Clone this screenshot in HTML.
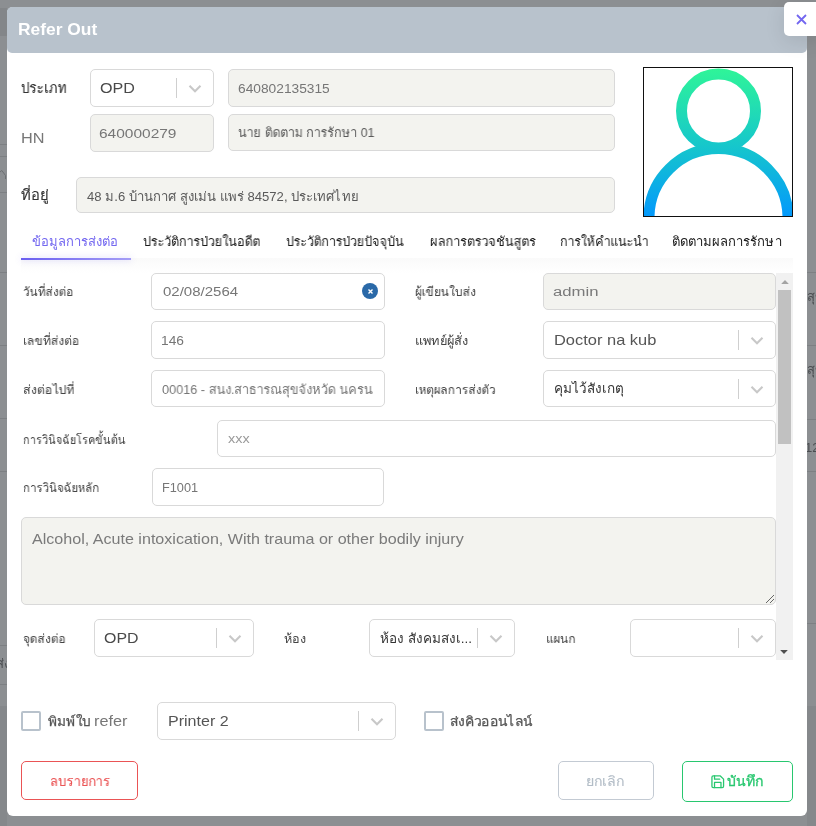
<!DOCTYPE html>
<html><head><meta charset="utf-8">
<style>
*{box-sizing:border-box;margin:0;padding:0}
html,body{width:816px;height:826px;overflow:hidden}
body{background:#8c8f92;font-family:"Liberation Sans",sans-serif;position:relative;color:#626262}
.a{position:absolute}
.t{position:absolute;line-height:40px;white-space:nowrap;transform-origin:0 0;will-change:transform}
.bgline{position:absolute;height:1px;background:#7d8083}
.modal{left:7px;top:7px;width:800px;height:809px;background:#fff;border-radius:6px}
.hdr{left:7px;top:7px;width:800px;height:46px;background:#b8c2cc;border-radius:5px}
.close{left:784px;top:2px;width:40px;height:34px;background:#fff;border-radius:5px;box-shadow:0 5px 20px 0 rgba(0,0,0,.1)}
.fld{position:absolute;border:1px solid #d9d9d9;border-radius:5px;background:#fff}
.dis{background:#f3f3ef}
.sep{position:absolute;width:1px;background:#cfcfcf}
.chev{position:absolute;width:14px;height:9px}
.cb{position:absolute;border:2px solid #b8c2cc;border-radius:2px;width:20px;height:20px}
.btn{position:absolute;border-radius:5px;border:1px solid}
</style></head><body>
<div class="a" style="left:0;top:8px;width:7px;height:28px;background:#838689"></div>
<div class="bgline" style="left:0;top:144px;width:7px"></div>
<div class="bgline" style="left:0;top:156px;width:7px"></div>
<svg class="a" style="left:0;top:169px" width="7" height="11" viewBox="0 0 7 11"><path d="M0 3L1.8 1.5L5.5 6.5V10" fill="none" stroke="#6d7073" stroke-width="1"/></svg>
<div class="bgline" style="left:0;top:192px;width:7px"></div>
<div class="bgline" style="left:0;top:272px;width:7px"></div>
<div class="bgline" style="left:0;top:345px;width:7px"></div>
<div class="bgline" style="left:0;top:418px;width:7px"></div>
<div class="bgline" style="left:0;top:471px;width:7px"></div>
<div class="bgline" style="left:0;top:645px;width:7px"></div>
<div class="bgline" style="left:0;top:684px;width:7px"></div>
<div class="a" style="left:0;top:706px;width:7px;height:120px;background:#85888b"></div>
<div class="bgline" style="left:807px;top:272px;width:9px"></div>
<div class="bgline" style="left:807px;top:345px;width:9px"></div>
<div class="bgline" style="left:807px;top:419px;width:9px"></div>
<div class="bgline" style="left:807px;top:471px;width:9px"></div>
<div class="bgline" style="left:807px;top:623px;width:9px"></div>
<div class="a" style="left:807px;top:706px;width:9px;height:120px;background:#85888b"></div>
<div class="a" style="left:0;top:650px;width:7px;height:30px;overflow:hidden"><div class="t" style="left:-4px;top:-6px;font-size:13px;color:#4a4d50">ส่ง</div></div>
<div class="a" style="left:807px;top:280px;width:9px;height:190px;overflow:hidden"><div class="t" style="left:0;top:-3px;font-size:13px;color:#4a4d50">สุข</div><div class="t" style="left:0;top:70px;font-size:13px;color:#4a4d50">สุข</div><div class="t" style="left:-2px;top:148px;font-size:13px;color:#4a4d50">12</div></div>
<div class="a modal"></div>
<div class="a hdr"></div>
<div class="a close"></div>
<svg class="a" style="left:795.5px;top:14px" width="11" height="11" viewBox="0 0 11 11"><path d="M1 1L10 10M10 1L1 10" stroke="#7367f0" stroke-width="1.8" fill="none"/></svg>

<!-- top patient info -->
<div class="fld" style="left:90px;top:69px;width:124px;height:38px"></div>
<div class="sep" style="left:176px;top:78px;height:20px"></div>
<svg class="chev" style="left:188px;top:84px" viewBox="0 0 14 9"><path d="M1.5 1.8L7 7.2L12.5 1.8" stroke="#c8c8c8" stroke-width="2.1" fill="none"/></svg>
<div class="fld dis" style="left:228px;top:69px;width:387px;height:38px"></div>
<div class="fld dis" style="left:90px;top:114px;width:124px;height:38px"></div>
<div class="fld dis" style="left:228px;top:114px;width:387px;height:37px"></div>
<div class="fld dis" style="left:76px;top:177px;width:539px;height:36px"></div>

<!-- photo -->
<div class="a" style="left:643px;top:67px;width:150px;height:150px;border:1px solid #111;background:#fff;overflow:hidden">
<svg width="148" height="148" viewBox="0 0 148 148" style="display:block">
<defs><linearGradient id="g" gradientUnits="userSpaceOnUse" x1="0" y1="0" x2="0" y2="148"><stop offset="0" stop-color="#2ff598"/><stop offset="0.5" stop-color="#17c9c9"/><stop offset="1" stop-color="#0499fb"/></linearGradient></defs>
<circle cx="74.5" cy="43" r="37" fill="none" stroke="url(#g)" stroke-width="11"/>
<path d="M5 150 A69 69 0 0 1 144 150" fill="none" stroke="url(#g)" stroke-width="11"/>
</svg>
</div>

<!-- tabs -->
<div class="a" style="left:21px;top:258px;width:772px;height:15px;background:linear-gradient(#fafafa,#fff)"></div>
<div class="a" style="left:21px;top:258px;width:110px;height:2px;background:linear-gradient(90deg,#6a5ef0,#a59ef6);box-shadow:0 0 6px 0 rgba(115,103,240,.35)"></div>

<!-- scroll content -->
<div class="fld" style="left:151px;top:273px;width:234px;height:37px"></div>
<div class="a" style="left:362px;top:283px;width:16px;height:16px;border-radius:50%;background:#2a69a8"></div>
<svg class="a" style="left:367.5px;top:288.5px" width="5" height="5" viewBox="0 0 5 5"><path d="M0.5 0.5L4.5 4.5M4.5 0.5L0.5 4.5" stroke="#fff" stroke-width="1.4"/></svg>
<div class="fld dis" style="left:543px;top:273px;width:233px;height:37px"></div>

<div class="fld" style="left:151px;top:321px;width:234px;height:38px"></div>
<div class="fld" style="left:543px;top:321px;width:233px;height:38px"></div>
<div class="sep" style="left:738px;top:330px;height:20px"></div>
<svg class="chev" style="left:750px;top:335.5px" viewBox="0 0 14 9"><path d="M1.5 1.8L7 7.2L12.5 1.8" stroke="#c8c8c8" stroke-width="2.1" fill="none"/></svg>

<div class="fld" style="left:151px;top:370px;width:234px;height:37px"></div>
<div class="fld" style="left:543px;top:370px;width:233px;height:37px"></div>
<div class="sep" style="left:738px;top:379px;height:20px"></div>
<svg class="chev" style="left:750px;top:384.5px" viewBox="0 0 14 9"><path d="M1.5 1.8L7 7.2L12.5 1.8" stroke="#c8c8c8" stroke-width="2.1" fill="none"/></svg>

<div class="fld" style="left:217px;top:420px;width:559px;height:37px"></div>
<div class="fld" style="left:152px;top:468px;width:232px;height:38px"></div>
<div class="fld dis" style="left:21px;top:517px;width:755px;height:88px"></div>
<svg class="a" style="left:765px;top:594px" width="10" height="10" viewBox="0 0 10 10"><path d="M9 1L1 9M9 5L5 9" stroke="#666" stroke-width="1"/></svg>

<div class="fld" style="left:94px;top:619px;width:160px;height:38px"></div>
<div class="sep" style="left:216px;top:628px;height:20px"></div>
<svg class="chev" style="left:228px;top:634px" viewBox="0 0 14 9"><path d="M1.5 1.8L7 7.2L12.5 1.8" stroke="#c8c8c8" stroke-width="2.1" fill="none"/></svg>
<div class="fld" style="left:369px;top:619px;width:146px;height:38px"></div>
<div class="sep" style="left:477px;top:628px;height:20px"></div>
<svg class="chev" style="left:489px;top:634px" viewBox="0 0 14 9"><path d="M1.5 1.8L7 7.2L12.5 1.8" stroke="#c8c8c8" stroke-width="2.1" fill="none"/></svg>
<div class="fld" style="left:630px;top:619px;width:146px;height:38px"></div>
<div class="sep" style="left:738px;top:628px;height:20px"></div>
<svg class="chev" style="left:750px;top:634px" viewBox="0 0 14 9"><path d="M1.5 1.8L7 7.2L12.5 1.8" stroke="#c8c8c8" stroke-width="2.1" fill="none"/></svg>

<!-- scrollbar -->
<div class="a" style="left:776px;top:273px;width:17px;height:387px;background:#f1f1f1"></div>
<div class="a" style="left:778px;top:290px;width:13px;height:154px;background:#c1c1c1"></div>
<svg class="a" style="left:780.5px;top:279px" width="8" height="6" viewBox="0 0 8 6"><path d="M0.2 5L4 1L7.8 5Z" fill="#a3a3a3"/></svg>
<svg class="a" style="left:780px;top:648.5px" width="8" height="6" viewBox="0 0 8 6"><path d="M0.2 1L4 5L7.8 1Z" fill="#505050"/></svg>

<!-- bottom -->
<div class="cb" style="left:21px;top:711px"></div>
<div class="fld" style="left:157px;top:702px;width:239px;height:38px"></div>
<div class="sep" style="left:358px;top:711px;height:20px"></div>
<svg class="chev" style="left:370px;top:717px" viewBox="0 0 14 9"><path d="M1.5 1.8L7 7.2L12.5 1.8" stroke="#c8c8c8" stroke-width="2.1" fill="none"/></svg>
<div class="cb" style="left:424px;top:711px"></div>

<div class="btn" style="left:21px;top:761px;width:117px;height:39px;border-color:#ea5455"></div>
<div class="btn" style="left:558px;top:761px;width:96px;height:39px;border-color:#c3cad3"></div>
<div class="btn" style="left:682px;top:761px;width:111px;height:41px;border-color:#28c76f"></div>
<svg class="a" style="left:710.3px;top:774.1px" width="15.5" height="15.5" viewBox="0 0 24 24" fill="none" stroke="#28c76f" stroke-width="2" stroke-linecap="round" stroke-linejoin="round"><path d="M19 21H5a2 2 0 0 1-2-2V5a2 2 0 0 1 2-2h11l5 5v11a2 2 0 0 1-2 2z"/><polyline points="17 21 17 13 7 13 7 21"/><polyline points="7 3 7 8 15 8"/></svg>

<div class="t" style="left:17.9px;top:9.0px;font-size:16.5px;font-weight:bold;color:#fff;transform:scaleX(1.054);">Refer Out</div>
<div class="t" style="left:20.6px;top:67.6px;font-size:14.5px;font-weight:normal;color:#333;transform:scaleX(0.921);-webkit-text-stroke:0.12px #333;">ประเภท</div>
<div class="t" style="left:99.9px;top:68.0px;font-size:15px;font-weight:normal;color:#4a4a4a;transform:scaleX(1.074);">OPD</div>
<div class="t" style="left:238.3px;top:69.0px;font-size:12.5px;font-weight:normal;color:#767676;transform:scaleX(1.100);">640802135315</div>
<div class="t" style="left:20.8px;top:117.8px;font-size:14.5px;font-weight:normal;color:#777;transform:scaleX(1.121);">HN</div>
<div class="t" style="left:98.8px;top:114.4px;font-size:12.5px;font-weight:normal;color:#767676;transform:scaleX(1.238);">640000279</div>
<div class="t" style="left:238.4px;top:113.0px;font-size:13px;font-weight:normal;color:#5a5a5a;transform:scaleX(0.960);">นาย ติดตาม การรักษา 01</div>
<div class="t" style="left:21.0px;top:175.0px;font-size:14.5px;font-weight:normal;color:#333;transform:scaleX(1.019);-webkit-text-stroke:0.12px #333;">ที่อยู่</div>
<div class="t" style="left:87.4px;top:177.0px;font-size:13px;font-weight:normal;color:#5a5a5a;transform:scaleX(1.007);">48 ม.6 บ้านกาศ สูงเม่น แพร่ 84572, ประเทศไทย</div>
<div class="t" style="left:32.2px;top:221.8px;font-size:13px;font-weight:normal;color:#7367f0;transform:scaleX(0.998);">ข้อมูลการส่งต่อ</div>
<div class="t" style="left:143.0px;top:221.8px;font-size:13px;font-weight:normal;color:#1a1a1a;transform:scaleX(0.969);">ประวัติการป่วยในอดีต</div>
<div class="t" style="left:286.2px;top:221.8px;font-size:13px;font-weight:normal;color:#1a1a1a;transform:scaleX(0.956);">ประวัติการป่วยปัจจุบัน</div>
<div class="t" style="left:429.5px;top:221.8px;font-size:13px;font-weight:normal;color:#1a1a1a;transform:scaleX(0.972);">ผลการตรวจชันสูตร</div>
<div class="t" style="left:559.5px;top:221.8px;font-size:13px;font-weight:normal;color:#1a1a1a;transform:scaleX(0.951);">การให้คำแนะนำ</div>
<div class="t" style="left:672.0px;top:221.8px;font-size:13px;font-weight:normal;color:#1a1a1a;transform:scaleX(1.005);">ติดตามผลการรักษา</div>
<div class="t" style="left:23.0px;top:272.3px;font-size:12.5px;font-weight:normal;color:#444;transform:scaleX(0.938);">วันที่ส่งต่อ</div>
<div class="t" style="left:162.7px;top:272.0px;font-size:12.5px;font-weight:normal;color:#767676;transform:scaleX(1.200);">02/08/2564</div>
<div class="t" style="left:414.5px;top:272.3px;font-size:12.5px;font-weight:normal;color:#444;transform:scaleX(0.952);">ผู้เขียนใบส่ง</div>
<div class="t" style="left:553.2px;top:272.2px;font-size:12.5px;font-weight:normal;color:#7a7a7a;transform:scaleX(1.337);">admin</div>
<div class="t" style="left:22.9px;top:321.0px;font-size:12.5px;font-weight:normal;color:#444;transform:scaleX(0.958);">เลขที่ส่งต่อ</div>
<div class="t" style="left:160.9px;top:321.0px;font-size:12.5px;font-weight:normal;color:#767676;transform:scaleX(1.100);">146</div>
<div class="t" style="left:414.8px;top:321.0px;font-size:12.5px;font-weight:normal;color:#444;transform:scaleX(1.026);">แพทย์ผู้สั่ง</div>
<div class="t" style="left:553.9px;top:320.2px;font-size:15px;font-weight:normal;color:#555;transform:scaleX(1.096);">Doctor na kub</div>
<div class="t" style="left:22.9px;top:370.0px;font-size:12.5px;font-weight:normal;color:#444;transform:scaleX(0.988);">ส่งต่อไปที่</div>
<div class="t" style="left:162.0px;top:370.0px;font-size:13px;font-weight:normal;color:#767676;transform:scaleX(0.975);">00016 - สนง.สาธารณสุขจังหวัด นครน</div>
<div class="t" style="left:414.9px;top:370.0px;font-size:12.5px;font-weight:normal;color:#444;transform:scaleX(0.937);">เหตุผลการส่งตัว</div>
<div class="t" style="left:553.5px;top:369.4px;font-size:13.5px;font-weight:normal;color:#333;transform:scaleX(1.003);">คุมไว้สังเกตุ</div>
<div class="t" style="left:23.0px;top:419.5px;font-size:12.5px;font-weight:normal;color:#444;transform:scaleX(0.869);">การวินิจฉัยโรคขั้นต้น</div>
<div class="t" style="left:227.8px;top:419.1px;font-size:12.5px;font-weight:normal;color:#9a9a9a;transform:scaleX(1.156);">xxx</div>
<div class="t" style="left:23.0px;top:468.0px;font-size:12.5px;font-weight:normal;color:#444;transform:scaleX(0.900);">การวินิจฉัยหลัก</div>
<div class="t" style="left:162.2px;top:468.2px;font-size:12.5px;font-weight:normal;color:#767676;transform:scaleX(1.018);">F1001</div>
<div class="t" style="left:32.0px;top:519.0px;font-size:15px;font-weight:normal;color:#7a7a7a;transform:scaleX(1.072);">Alcohol, Acute intoxication, With trauma or other bodily injury</div>
<div class="t" style="left:23.3px;top:619.0px;font-size:12.5px;font-weight:normal;color:#444;transform:scaleX(0.958);">จุดส่งต่อ</div>
<div class="t" style="left:104.2px;top:618.1px;font-size:15px;font-weight:normal;color:#4a4a4a;transform:scaleX(1.061);">OPD</div>
<div class="t" style="left:284.1px;top:619.1px;font-size:12.5px;font-weight:normal;color:#444;transform:scaleX(1.010);">ห้อง</div>
<div class="t" style="left:379.5px;top:618.8px;font-size:13.5px;font-weight:normal;color:#333;transform:scaleX(1.001);">ห้อง สังคมสงเ...</div>
<div class="t" style="left:545.5px;top:619.1px;font-size:12.5px;font-weight:normal;color:#444;transform:scaleX(0.937);">แผนก</div>
<div class="t" style="left:48.3px;top:701.6px;font-size:13.3px;font-weight:normal;color:#555;transform:scaleX(1.022);-webkit-text-stroke:0.25px #555;">พิมพ์ใบ</div>
<div class="t" style="left:94.1px;top:700.6px;font-size:15px;font-weight:normal;color:#777;transform:scaleX(1.083);">refer</div>
<div class="t" style="left:168.1px;top:700.8px;font-size:15px;font-weight:normal;color:#555;transform:scaleX(1.069);">Printer 2</div>
<div class="t" style="left:450.2px;top:701.6px;font-size:13.3px;font-weight:normal;color:#555;transform:scaleX(1.042);-webkit-text-stroke:0.25px #555;">ส่งคิวออนไลน์</div>
<div class="t" style="left:49.7px;top:760.8px;font-size:14px;font-weight:normal;color:#ea5455;transform:scaleX(0.914);-webkit-text-stroke:0.15px #ea5455;">ลบรายการ</div>
<div class="t" style="left:585.7px;top:760.5px;font-size:14px;font-weight:normal;color:#b3bdc7;transform:scaleX(1.008);-webkit-text-stroke:0.15px #b3bdc7;">ยกเลิก</div>
<div class="t" style="left:727.3px;top:760.5px;font-size:14px;font-weight:normal;color:#28c76f;transform:scaleX(1.006);-webkit-text-stroke:0.3px #28c76f;">บันทึก</div>
</body></html>
